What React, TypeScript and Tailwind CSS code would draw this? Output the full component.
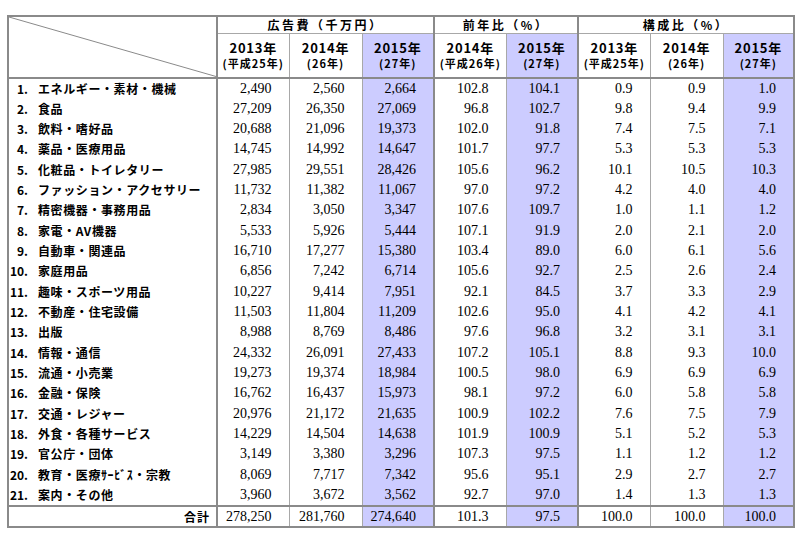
const rows: string[][] = [
  ["1.", "エネルギー・素材・機械", "2,490", "2,560", "2,664", "102.8", "104.1", "0.9", "0.9", "1.0"],
  ["2.", "食品", "27,209", "26,350", "27,069", "96.8", "102.7", "9.8", "9.4", "9.9"],
  ["3.", "飲料・嗜好品", "20,688", "21,096", "19,373", "102.0", "91.8", "7.4", "7.5", "7.1"],
  ["4.", "薬品・医療用品", "14,745", "14,992", "14,647", "101.7", "97.7", "5.3", "5.3", "5.3"],
  ["5.", "化粧品・トイレタリー", "27,985", "29,551", "28,426", "105.6", "96.2", "10.1", "10.5", "10.3"],
  ["6.", "ファッション・アクセサリー", "11,732", "11,382", "11,067", "97.0", "97.2", "4.2", "4.0", "4.0"],
  ["7.", "精密機器・事務用品", "2,834", "3,050", "3,347", "107.6", "109.7", "1.0", "1.1", "1.2"],
  ["8.", "家電・AV機器", "5,533", "5,926", "5,444", "107.1", "91.9", "2.0", "2.1", "2.0"],
  ["9.", "自動車・関連品", "16,710", "17,277", "15,380", "103.4", "89.0", "6.0", "6.1", "5.6"],
  ["10.", "家庭用品", "6,856", "7,242", "6,714", "105.6", "92.7", "2.5", "2.6", "2.4"],
  ["11.", "趣味・スポーツ用品", "10,227", "9,414", "7,951", "92.1", "84.5", "3.7", "3.3", "2.9"],
  ["12.", "不動産・住宅設備", "11,503", "11,804", "11,209", "102.6", "95.0", "4.1", "4.2", "4.1"],
  ["13.", "出版", "8,988", "8,769", "8,486", "97.6", "96.8", "3.2", "3.1", "3.1"],
  ["14.", "情報・通信", "24,332", "26,091", "27,433", "107.2", "105.1", "8.8", "9.3", "10.0"],
  ["15.", "流通・小売業", "19,273", "19,374", "18,984", "100.5", "98.0", "6.9", "6.9", "6.9"],
  ["16.", "金融・保険", "16,762", "16,437", "15,973", "98.1", "97.2", "6.0", "5.8", "5.8"],
  ["17.", "交通・レジャー", "20,976", "21,172", "21,635", "100.9", "102.2", "7.6", "7.5", "7.9"],
  ["18.", "外食・各種サービス", "14,229", "14,504", "14,638", "101.9", "100.9", "5.1", "5.2", "5.3"],
  ["19.", "官公庁・団体", "3,149", "3,380", "3,296", "107.3", "97.5", "1.1", "1.2", "1.2"],
  ["20.", "教育・医療ｻｰﾋﾞｽ・宗教", "8,069", "7,717", "7,342", "95.6", "95.1", "2.9", "2.7", "2.7"],
  ["21.", "案内・その他", "3,960", "3,672", "3,562", "92.7", "97.0", "1.4", "1.3", "1.3"],
];

const total = ["278,250", "281,760", "274,640", "101.3", "97.5", "100.0", "100.0", "100.0"];

// which data columns are shaded, and which get a thick left rule
const shaded = [false, false, true, false, true, false, false, true];
const thickLeft = [true, false, false, true, false, true, false, false];

const years = [
  ["2013年", "(平成25年)"],
  ["2014年", "(26年)"],
  ["2015年", "(27年)"],
  ["2014年", "(平成26年)"],
  ["2015年", "(27年)"],
  ["2013年", "(平成25年)"],
  ["2014年", "(26年)"],
  ["2015年", "(27年)"],
];

const jp = "font-['Noto_Sans_CJK_JP',sans-serif]";
const num = "font-['Liberation_Serif','Times_New_Roman',serif]";

function cellCls(i: number) {
  return [
    thickLeft[i] ? "border-l-2 border-l-[#8a8a8a]" : "border-l border-l-[#a8a8a8]",
    shaded[i] ? "bg-[#ccccff]" : "bg-white",
  ].join(" ");
}

export default function App() {
  return (
    <div className="w-[800px] h-[542px] bg-white pt-[15px] pl-[7px]">
      <table className="table-fixed border-collapse w-[786px] border-2 border-[#8a8a8a] text-black">
        <colgroup>
          <col className="w-[209px]" />
          <col className="w-[72px]" />
          <col className="w-[73px]" />
          <col className="w-[72px]" />
          <col className="w-[72px]" />
          <col className="w-[72px]" />
          <col className="w-[72px]" />
          <col className="w-[73px]" />
          <col className="w-[71px]" />
        </colgroup>
        <thead className={jp}>
          <tr>
            <th rowSpan={2} className="relative p-0 border-b-2 border-[#8a8a8a]">
              <svg className="absolute inset-0 w-full h-full" preserveAspectRatio="none" viewBox="0 0 100 100">
                <line x1="0" y1="0" x2="100" y2="100" stroke="#8a8a8a" strokeWidth="1" vectorEffect="non-scaling-stroke" />
              </svg>
            </th>
            <th colSpan={3} className="h-[17px] p-0 border-l-2 border-[#8a8a8a] border-b border-b-[#a8a8a8] text-[12px] leading-[16px] font-bold tracking-[2.5px]">
              広告費（千万円）
            </th>
            <th colSpan={2} className="h-[17px] p-0 border-l-2 border-[#8a8a8a] border-b border-b-[#a8a8a8] text-[12px] leading-[16px] font-bold tracking-[2.5px]">
              前年比（%）
            </th>
            <th colSpan={3} className="h-[17px] p-0 border-l-2 border-[#8a8a8a] border-b border-b-[#a8a8a8] text-[12px] leading-[16px] font-bold tracking-[2.5px]">
              構成比（%）
            </th>
          </tr>
          <tr>
            {years.map(([y, s], i) => (
              <th key={i} className={`h-[44px] p-0 border-b-2 border-b-[#8a8a8a] ${cellCls(i)} font-bold`}>
                <div className="text-[13px] leading-[16px] tracking-[0.8px]">{y}</div>
                <div className="text-[11px] leading-[14px] tracking-[1px]">{s}</div>
              </th>
            ))}
          </tr>
        </thead>
        <tbody>
          {rows.map((r) => (
            <tr key={r[0]}>
              <td className="h-[20.33px] p-0">
                <div className={`flex items-center ${jp} font-bold text-[12px] leading-[20px]`}>
                  <span className="w-[19px] text-right">{r[0]}</span>
                  <span className="ml-[10px] tracking-[0.6px] whitespace-nowrap">{r[1]}</span>
                </div>
              </td>
              {r.slice(2).map((v, i) => (
                <td key={i} className={`h-[20.33px] p-0 pr-[17px] text-right ${num} text-[14px] leading-[18px] ${cellCls(i)}`}>
                  {v}
                </td>
              ))}
            </tr>
          ))}
          <tr>
            <td className={`h-[21px] p-0 pr-[6px] text-right border-t-2 border-t-[#8a8a8a] ${jp} font-bold text-[12px] leading-[19px] tracking-[1px]`}>
              合計
            </td>
            {total.map((v, i) => (
              <td key={i} className={`h-[21px] p-0 pr-[17px] text-right border-t-2 border-t-[#8a8a8a] ${num} text-[14px] leading-[19px] ${cellCls(i)}`}>
                {v}
              </td>
            ))}
          </tr>
        </tbody>
      </table>
    </div>
  );
}
